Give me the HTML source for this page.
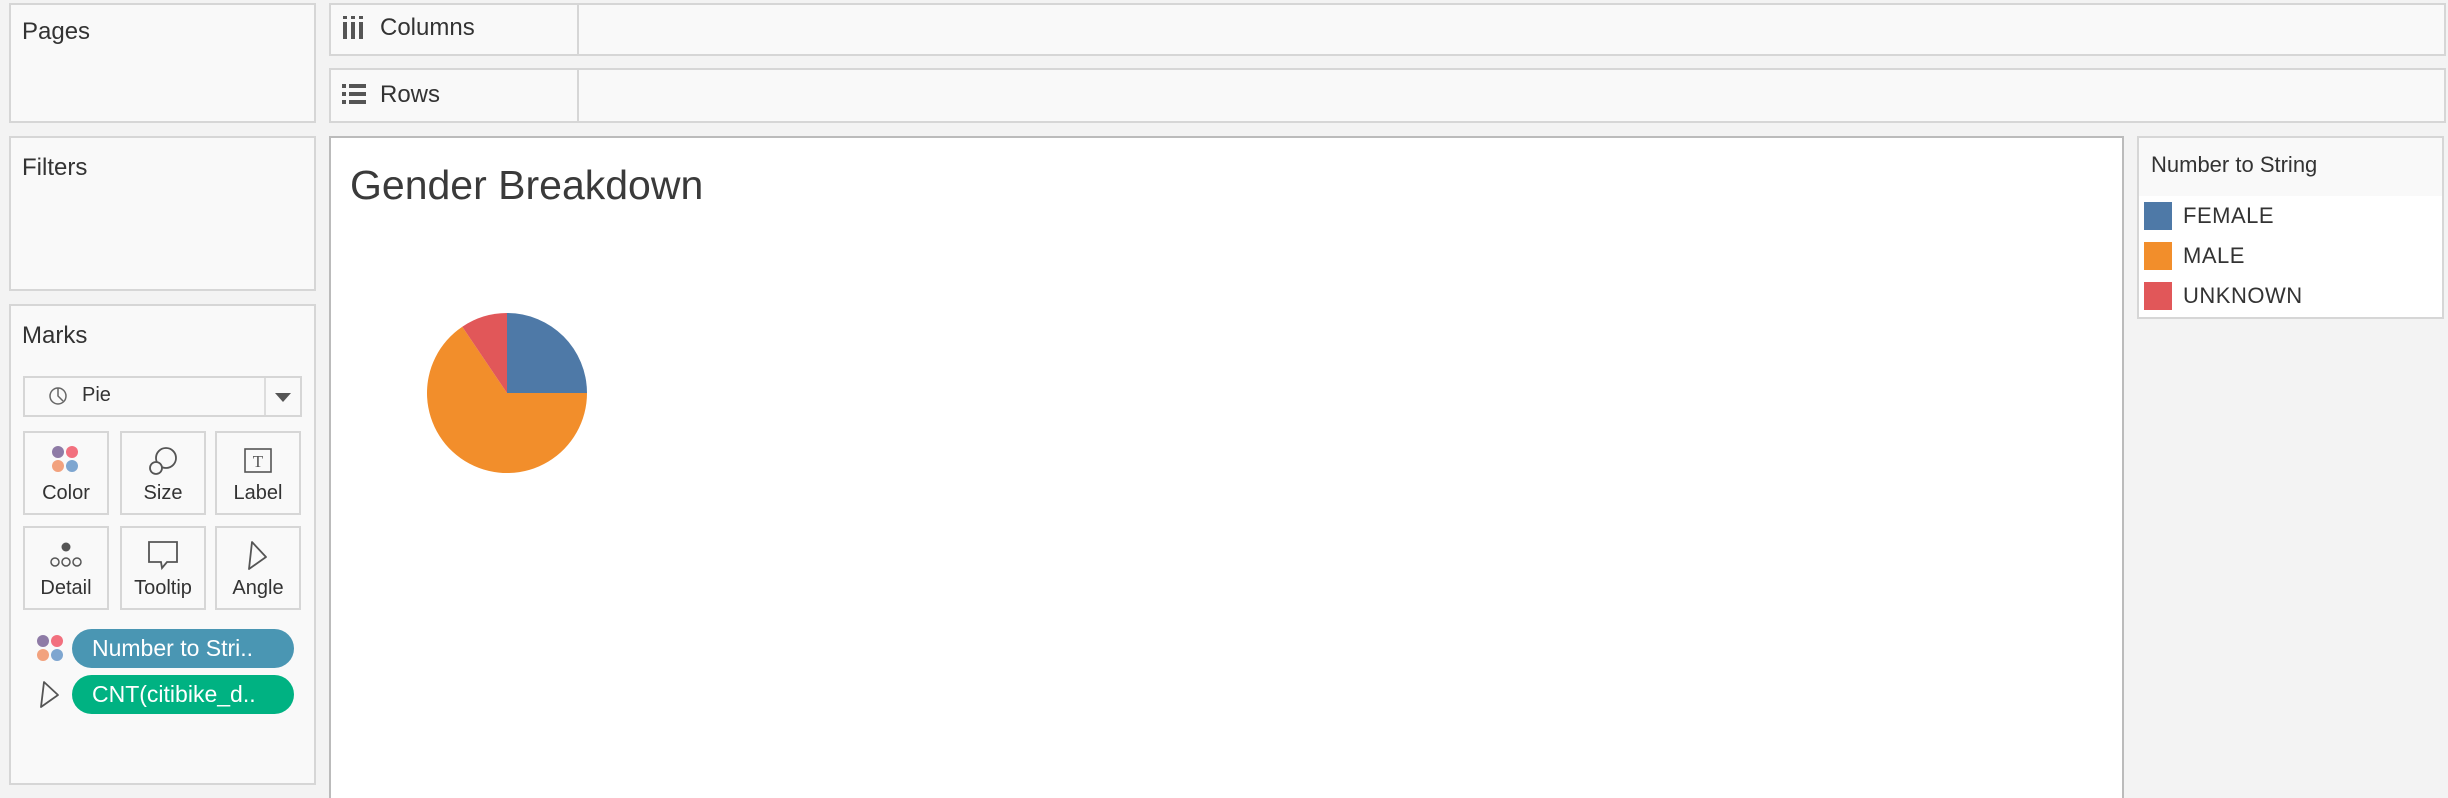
<!DOCTYPE html>
<html><head><meta charset="utf-8"><style>
*{box-sizing:border-box;margin:0;padding:0}
html,body{width:2448px;height:798px;overflow:hidden}
body{background:#f3f3f3;font-family:"Liberation Sans",sans-serif;color:#333;position:relative}
.p{position:absolute;background:#f9f9f9;border:2px solid #d6d6d6}
.lbl{position:absolute;font-size:24px;color:#333}
.btn{position:absolute;width:86px;height:84px;border:2px solid #d6d6d6;background:#f9f9f9;text-align:center;font-size:20px}
.btn span{position:absolute;bottom:8px;left:0;right:0}
.btn svg{position:absolute;left:50%;top:12px;transform:translateX(-50%)}
.pill{position:absolute;left:72px;width:222px;height:39px;border-radius:20px;color:#fff;font-size:23px;line-height:39px;padding-left:20px}
.sw{position:absolute;left:2144px;width:28px;height:28px}
.li{position:absolute;left:2183px;font-size:22px;letter-spacing:0.5px}
</style></head><body>
<div class="p" style="left:9px;top:3px;width:307px;height:120px"></div>
<div class="lbl" style="left:22px;top:18px">Pages</div>
<div class="p" style="left:329px;top:3px;width:2117px;height:53px"></div>
<div style="position:absolute;left:577px;top:3px;width:2px;height:53px;background:#d6d6d6"></div>
<svg style="position:absolute;left:342px;top:16px" width="22" height="24"><g fill="#555"><rect x="1" y="0" width="4" height="3"/><rect x="9" y="0" width="4" height="3"/><rect x="17" y="0" width="4" height="3"/><rect x="1" y="6" width="4" height="17"/><rect x="9" y="6" width="4" height="17"/><rect x="17" y="6" width="4" height="17"/></g></svg>
<div class="lbl" style="left:380px;top:14px">Columns</div>
<div class="p" style="left:329px;top:68px;width:2117px;height:55px"></div>
<div style="position:absolute;left:577px;top:68px;width:2px;height:55px;background:#d6d6d6"></div>
<svg style="position:absolute;left:342px;top:84px" width="24" height="22"><g fill="#555"><rect x="0" y="0" width="4" height="4"/><rect x="7" y="0" width="17" height="4"/><rect x="0" y="8" width="4" height="4"/><rect x="7" y="8" width="17" height="4"/><rect x="0" y="16" width="4" height="4"/><rect x="7" y="16" width="17" height="4"/></g></svg>
<div class="lbl" style="left:380px;top:81px">Rows</div>
<div class="p" style="left:9px;top:136px;width:307px;height:155px"></div>
<div class="lbl" style="left:22px;top:154px">Filters</div>
<div class="p" style="left:9px;top:304px;width:307px;height:481px"></div>
<div class="lbl" style="left:22px;top:322px">Marks</div>
<div style="position:absolute;left:23px;top:376px;width:279px;height:41px;border:2px solid #d6d6d6;background:#f9f9f9"></div>
<div style="position:absolute;left:264px;top:378px;width:2px;height:37px;background:#ddd"></div>
<svg style="position:absolute;left:48px;top:386px" width="20" height="20"><circle cx="10" cy="10" r="8" fill="none" stroke="#666" stroke-width="1.5"/><path d="M10 2V10L15 15" fill="none" stroke="#666" stroke-width="1.5"/></svg>
<div style="position:absolute;left:82px;top:384px;font-size:20px">Pie</div>
<div style="position:absolute;left:275px;top:393px;width:0;height:0;border-left:8px solid transparent;border-right:8px solid transparent;border-top:9px solid #555"></div>
<div class="btn" style="left:23px;top:431px"><svg width="30" height="30"><circle cx="7" cy="7" r="6" fill="#8e7ba6"/><circle cx="21" cy="7" r="6" fill="#f2707e"/><circle cx="7" cy="21" r="6" fill="#f2a27e"/><circle cx="21" cy="21" r="6" fill="#7ea6d0"/></svg><span>Color</span></div>
<div class="btn" style="left:120px;top:431px"><svg width="32" height="32"><circle cx="19" cy="13" r="10" fill="none" stroke="#555" stroke-width="1.8"/><circle cx="9" cy="23" r="6" fill="#f9f9f9" stroke="#555" stroke-width="1.8"/></svg><span>Size</span></div>
<div class="btn" style="left:215px;top:431px"><svg width="30" height="30"><rect x="2" y="4" width="26" height="23" fill="none" stroke="#555" stroke-width="1.6"/><text x="15" y="22" font-family="Liberation Serif" font-size="17" text-anchor="middle" fill="#555">T</text></svg><span>Label</span></div>
<div class="btn" style="left:23px;top:526px"><svg width="34" height="30"><circle cx="17" cy="7" r="4.5" fill="#555"/><circle cx="6" cy="22" r="4" fill="none" stroke="#555" stroke-width="1.5"/><circle cx="17" cy="22" r="4" fill="none" stroke="#555" stroke-width="1.5"/><circle cx="28" cy="22" r="4" fill="none" stroke="#555" stroke-width="1.5"/></svg><span>Detail</span></div>
<div class="btn" style="left:120px;top:526px"><svg width="32" height="34"><path d="M2 2H30V22H20L15 28L14 22H2Z" fill="none" stroke="#555" stroke-width="1.8"/></svg><span>Tooltip</span></div>
<div class="btn" style="left:215px;top:526px"><svg width="30" height="34"><path d="M9 2L23 17L6 29Z" fill="none" stroke="#555" stroke-width="1.8" stroke-linejoin="round"/></svg><span>Angle</span></div>
<svg style="position:absolute;left:36px;top:634px" width="28" height="28"><circle cx="7" cy="7" r="6" fill="#8e7ba6"/><circle cx="21" cy="7" r="6" fill="#f2707e"/><circle cx="7" cy="21" r="6" fill="#f2a27e"/><circle cx="21" cy="21" r="6" fill="#7ea6d0"/></svg>
<div class="pill" style="top:629px;background:#4a96b3">Number to Stri..</div>
<svg style="position:absolute;left:38px;top:680px" width="24" height="30"><path d="M6 2L20 15L3 27Z" fill="none" stroke="#555" stroke-width="1.8" stroke-linejoin="round"/></svg>
<div class="pill" style="top:675px;background:#00b282">CNT(citibike_d..</div>
<div style="position:absolute;left:329px;top:136px;width:1795px;height:662px;background:#fff;border:2px solid #bbb;border-bottom:none"></div>
<div style="position:absolute;left:350px;top:162px;font-size:41px;color:#3a3a3a">Gender Breakdown</div>
<svg style="position:absolute;left:0;top:0" width="800" height="500">
<path d="M507 393L587 393A80 80 0 1 1 462.3 326.7Z" fill="#f28e2b"/>
<path d="M507 393L507 313A80 80 0 0 1 587 393Z" fill="#4e79a7"/>
<path d="M507 393L462.3 326.7A80 80 0 0 1 507 313Z" fill="#e15759"/>
</svg>
<div style="position:absolute;left:2137px;top:136px;width:307px;height:183px;background:#fff;border:2px solid #d6d6d6"></div>
<div style="position:absolute;left:2139px;top:138px;width:303px;height:58px;background:#f9f9f9"></div>
<div style="position:absolute;left:2151px;top:152px;font-size:22px">Number to String</div>
<div class="sw" style="top:202px;background:#4e79a7"></div><div class="li" style="top:203px">FEMALE</div>
<div class="sw" style="top:242px;background:#f28e2b"></div><div class="li" style="top:243px">MALE</div>
<div class="sw" style="top:282px;background:#e15759"></div><div class="li" style="top:283px">UNKNOWN</div>
</body></html>
